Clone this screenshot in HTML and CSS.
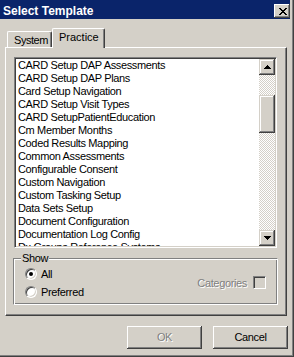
FILE: index.html
```html
<!DOCTYPE html>
<html>

<head>
    <title>Select Template</title>
    <link rel="stylesheet" href="styles.css">
</head>

<body>
    <div class="window">
        <div class="titlebar">
            <span class="title">Select Template</span>
            <div class="close-btn">
                <svg width="8" height="7" viewBox="0 0 8 7" shape-rendering="crispEdges">
                    <path d="M0 0h2v1H0z M6 0h2v1H6z M1 1h2v1H1z M5 1h2v1H5z M2 2h4v1H2z M3 3h2v1H3z M2 4h4v1H2z M1 5h2v1H1z M5 5h2v1H5z M0 6h2v1H0z M6 6h2v1H6z" fill="#000"/>
                </svg>
            </div>
        </div>

        <div class="tabs">
            <div class="tab">System</div>
            <div class="tab selected">Practice</div>
        </div>

        <div class="panel">
            <div class="listbox">
                <ul class="items">
                    <li>CARD Setup DAP Assessments</li>
                    <li>CARD Setup DAP Plans</li>
                    <li>Card Setup Navigation</li>
                    <li>CARD Setup Visit Types</li>
                    <li>CARD SetupPatientEducation</li>
                    <li>Cm Member Months</li>
                    <li>Coded Results Mapping</li>
                    <li>Common Assessments</li>
                    <li>Configurable Consent</li>
                    <li>Custom Navigation</li>
                    <li>Custom Tasking Setup</li>
                    <li>Data Sets Setup</li>
                    <li>Document Configuration</li>
                    <li>Documentation Log Config</li>
                    <li>Dx Groups Reference Systems</li>
                </ul>
                <div class="scrollbar">
                    <div class="sb-btn">
                        <svg width="7" height="4" viewBox="0 0 7 4" shape-rendering="crispEdges">
                            <path d="M3 0h1v1H3z M2 1h3v1H2z M1 2h5v1H1z M0 3h7v1H0z" fill="#000"/>
                        </svg>
                    </div>
                    <div class="sb-track">
                        <div class="sb-thumb"></div>
                    </div>
                    <div class="sb-btn">
                        <svg width="7" height="4" viewBox="0 0 7 4" shape-rendering="crispEdges">
                            <path d="M0 0h7v1H0z M1 1h5v1H1z M2 2h3v1H2z M3 3h1v1H3z" fill="#000"/>
                        </svg>
                    </div>
                </div>
            </div>

            <div class="groupbox">
                <span class="legend">Show</span>
                <div class="radios">
                    <label class="radio-row"><span class="radio"><span class="dot"></span></span>All</label>
                    <label class="radio-row"><span class="radio"></span>Preferred</label>
                </div>
                <div class="categories">
                    <span class="disabled">Categories</span>
                    <span class="checkbox"></span>
                </div>
            </div>
        </div>

        <div class="buttons">
            <div class="btn disabled">OK</div>
            <div class="btn">Cancel</div>
        </div>
    </div>
</body>

</html>
```

FILE: styles.css
```css
body {
    margin: 0;
    font-family: "Liberation Sans", Arial, sans-serif;
    font-size: 11px;
    letter-spacing: -0.35px; /* narrow it down to the Tahoma widths */
    color: #000000;
}

/* dialog frame */
.window {
    width: 294px;
    height: 357px;
    background-color: #d4d0c8;
    box-sizing: border-box;
    box-shadow: inset -1px -1px #404040, inset -2px -2px #808080;
    overflow: hidden;
}

.titlebar {
    height: 19px;
    margin-right: 4px;
    background-color: #0a246a;
    display: flex;
    align-items: flex-start;
    justify-content: space-between;
    padding-left: 3px;
}

.title {
    margin-top: 4px;
    line-height: 14px;
    font-size: 12px;
    font-weight: bold;
    letter-spacing: 0;
    color: #ffffff;
}

.close-btn {
    width: 16px;
    height: 14px;
    margin-top: 4px;
    background-color: #d4d0c8;
    box-shadow: inset -1px -1px #404040, inset 1px 1px #ffffff, inset -2px -2px #808080;
    display: flex;
    align-items: center;
    justify-content: center;
    padding-left: 1px;
    box-sizing: border-box;
}

/* tabs */
.tabs {
    display: flex;
    align-items: flex-end;
    margin: 9px 0 0 7px;
}

.tab {
    height: 16px;
    width: 45px;
    box-sizing: border-box;
    border-top: 1px solid #ffffff;
    border-left: 1px solid #ffffff;
    border-right: 1px solid #404040;
    border-radius: 2px 2px 0 0;
    box-shadow: inset -1px 0 #808080;
    padding: 1px 0 0 6px;
    line-height: 14px;
    letter-spacing: -0.45px;
    white-space: nowrap;
}

.tab.selected {
    position: relative;
    z-index: 1;
    height: 20px;
    width: 53px;
    margin-bottom: -1px;
    background-color: #d4d0c8;
    letter-spacing: 0;
}

.panel {
    width: 282px;
    height: 269px;
    margin-left: 5px;
    box-sizing: border-box;
    border: 1px solid;
    border-color: #ffffff #404040 #404040 #ffffff;
    box-shadow: inset -1px -1px #808080;
    padding: 9px 0 0 8px;
}

/* list */
.listbox {
    width: 263px;
    height: 191px;
    box-sizing: border-box;
    border: 1px solid;
    border-color: #808080 #ffffff #ffffff #808080;
    box-shadow: inset 1px 1px #404040, inset -1px -1px #d4d0c8;
    background-color: #ffffff;
    padding: 1px;
    display: flex;
    overflow: hidden;
}

.items {
    flex: 1;
    list-style: none;
    margin: 0;
    padding: 0 0 0 2px;
    overflow: hidden;
    line-height: 13px;
    white-space: nowrap;
}

.scrollbar {
    width: 16px;
    display: flex;
    flex-direction: column;
}

.sb-btn,
.sb-thumb {
    background-color: #d4d0c8;
    box-shadow: inset -1px -1px #404040, inset 1px 1px #d4d0c8, inset -2px -2px #808080, inset 2px 2px #ffffff;
}

.sb-btn {
    height: 16px;
    display: flex;
    align-items: center;
    justify-content: center;
}

.sb-track {
    flex: 1;
    background-color: #d4d0c8;
    background-image: repeating-conic-gradient(#ffffff 0 25%, #d4d0c8 0 50%);
    background-size: 2px 2px;
}

.sb-thumb {
    height: 38px;
    margin-top: 20px;
}

/* show group */
.groupbox {
    position: relative;
    width: 265px;
    height: 47px;
    margin: 10px 0 0 -1px;
    box-sizing: border-box;
    border: 1px solid;
    border-color: #808080 #ffffff #ffffff #808080;
    box-shadow: inset 1px 1px #ffffff, inset -1px -1px #808080;
    display: flex;
    justify-content: space-between;
    align-items: center;
    padding: 0 11px 0 11px;
}

.legend {
    position: absolute;
    left: 7px;
    top: -7px;
    padding: 0 1px;
    line-height: 13px;
    background-color: #d4d0c8;
}

.radios {
    display: flex;
    flex-direction: column;
    gap: 2px;
    align-self: flex-start;
    padding-top: 7px;
}

.radio-row {
    display: flex;
    align-items: center;
    height: 16px;
    gap: 4px;
}

.radio {
    width: 12px;
    height: 12px;
    box-sizing: border-box;
    border-radius: 50%;
    border: 1px solid;
    border-color: #808080 #ffffff #ffffff #808080;
    box-shadow: inset 1px 1px #404040, inset -1px -1px #d4d0c8;
    background-color: #ffffff;
    display: flex;
    align-items: center;
    justify-content: center;
}

.dot {
    width: 4px;
    height: 4px;
    border-radius: 50%;
    background-color: #000000;
}

.categories {
    display: flex;
    align-items: center;
    gap: 6px;
    margin-top: 2px;
}

.disabled {
    color: #808080;
    text-shadow: 1px 1px #ffffff;
}

.checkbox {
    width: 13px;
    height: 13px;
    box-sizing: border-box;
    border: 1px solid;
    border-color: #808080 #ffffff #ffffff #808080;
    box-shadow: inset 1px 1px #404040, inset -1px -1px #d4d0c8;
    background-color: #d4d0c8;
}

/* dialog buttons */
.buttons {
    display: flex;
    justify-content: flex-end;
    gap: 11px;
    margin-top: 10px;
    padding-right: 6px;
}

.btn {
    width: 75px;
    height: 23px;
    line-height: 23px;
    text-align: center;
    box-shadow: inset -1px -1px #404040, inset 1px 1px #ffffff, inset -2px -2px #808080, inset 2px 2px #d4d0c8;
}
```
